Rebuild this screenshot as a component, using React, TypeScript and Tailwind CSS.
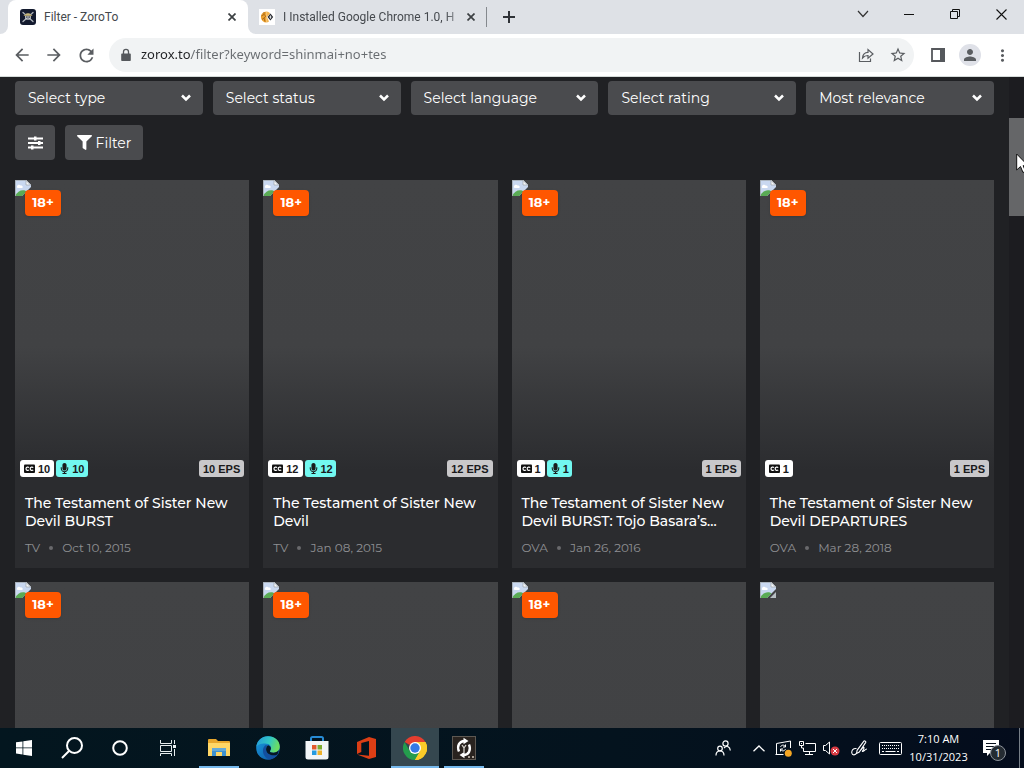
import React from "react";
import { FaFilter, FaMicrophone } from "react-icons/fa";
import { MdArrowBack, MdArrowForward, MdRefresh, MdLock, MdStarBorder, MdPerson, MdMoreVert } from "react-icons/md";

type Anime = {
  title: string;
  kind: string;
  date: string;
  sub: number;
  dub?: number;
  eps: number;
};

const filters = ["Select type", "Select status", "Select language", "Select rating", "Most relevance"];

const results: Anime[] = [
  { title: "The Testament of Sister New Devil BURST", kind: "TV", date: "Oct 10, 2015", sub: 10, dub: 10, eps: 10 },
  { title: "The Testament of Sister New Devil", kind: "TV", date: "Jan 08, 2015", sub: 12, dub: 12, eps: 12 },
  { title: "The Testament of Sister New Devil BURST: Tojo Basara’s…", kind: "OVA", date: "Jan 26, 2016", sub: 1, dub: 1, eps: 1 },
  { title: "The Testament of Sister New Devil DEPARTURES", kind: "OVA", date: "Mar 28, 2018", sub: 1, eps: 1 },
];

const nextRow = [true, true, true, false];

function CloseIcon() {
  return (
    <svg width="8" height="8" viewBox="0 0 8 8" stroke="#3c4043" strokeWidth="1.7">
      <path d="M0.5 0.5 7.5 7.5M7.5 0.5 0.5 7.5" />
    </svg>
  );
}

function PirateIcon() {
  return (
    <svg width="16" height="16" viewBox="0 0 16 16" className="shrink-0">
      <rect width="16" height="16" rx="3" fill="#131a2e" />
      <path d="M3 3.500 13 12.500M13 3.500 3 12.500" stroke="#aeb4bb" strokeWidth="1.3" strokeLinecap="round" />
      <circle cx="8" cy="8" r="2.900" fill="#d5d8d8" />
      <path d="M5 6.200C5.300 3.700 10.700 3.700 11 6.200z" fill="#c5b67c" />
      <path d="M3.800 6.500h8.400" stroke="#a3945f" strokeWidth="0.9" />
      <circle cx="6.900" cy="8.100" r="0.8" fill="#131a2e" />
      <circle cx="9.100" cy="8.100" r="0.8" fill="#131a2e" />
      <path d="M6.700 10h2.600" stroke="#131a2e" strokeWidth="0.6" />
    </svg>
  );
}

function ForumIcon() {
  return (
    <svg width="16" height="16" viewBox="0 0 16 16" className="shrink-0">
      <rect width="16" height="16" fill="#fff" />
      <path d="M7.500 2.400a5.600 5.600 0 1 0 0 11.200z" fill="#eda32f" />
      <path d="M7.500 2.400c2 0 3 1 3.600 2L8 8l2 4.600c-.8.6-1.600 1-2.500 1z" fill="#f3b44f" />
      <path d="M2.300 7 5 5.500 6.800 7.200 5 9 3 10.500M5 5.500V3M5 9l1 3.600" stroke="#9b5c17" strokeWidth="0.8" fill="none" />
      <path d="M11.400 4.400 14.200 8l-2.800 3.600L8.600 8z" fill="#26282d" />
      <path d="M11.400 6 12.500 8l-1.100 2.200L10.300 8z" fill="#d9dce0" />
    </svg>
  );
}

function TabStrip() {
  return (
    <header className="flex h-[34px] shrink-0 bg-[#dee1e6] font-[Roboto,sans-serif] text-xs text-[#45494e]">
      <div className="flex w-2 items-end bg-white">
        <span className="h-full w-full rounded-br-lg bg-[#dee1e6]" />
      </div>
      <div className="flex w-60 items-center bg-[#dee1e6]">
        <div className="flex h-full w-full items-center rounded-t-lg bg-white px-3">
          <PirateIcon />
          <button className="ml-2 flex-1 text-left">Filter - ZoroTo</button>
          <button aria-label="Close tab" className="flex w-2 justify-center"><CloseIcon /></button>
        </div>
      </div>
      <div className="flex bg-white">
        <div className="flex w-[238px] items-center rounded-bl-lg bg-[#dee1e6] px-[11px]">
          <ForumIcon />
          <button className="ml-2 flex-1 whitespace-nowrap text-left [mask-image:linear-gradient(90deg,#000_88%,transparent)]">
            I Installed Google Chrome 1.0, H
          </button>
          <button aria-label="Close tab" className="flex w-2 justify-center"><CloseIcon /></button>
        </div>
      </div>
      <span className="my-[7px] w-px bg-[#85898e]" />
      <button aria-label="New tab" className="flex w-11 items-center justify-center">
        <svg width="12" height="12" viewBox="0 0 12 12" stroke="#2f3237" strokeWidth="2"><path d="M6 0v12M0 6h12" /></svg>
      </button>
      <div className="ml-auto flex h-7">
        <button aria-label="Search tabs" className="flex w-[46px] items-center justify-center">
          <svg width="12" height="8" viewBox="0 0 12 8" fill="none" stroke="#333" strokeWidth="1.2"><path d="M1 1 6 6.5 11 1" /></svg>
        </button>
        <button aria-label="Minimize" className="flex w-[46px] items-center justify-center">
          <svg width="10" height="10" viewBox="0 0 10 10" stroke="#111"><path d="M0 5.5h10" /></svg>
        </button>
        <button aria-label="Restore" className="flex w-[46px] items-center justify-center">
          <svg width="10" height="10" viewBox="0 0 10 10" fill="none" stroke="#111"><path d="M.5 2.5h7v7h-7zM2.5 2.5v-2h7v7h-2" /></svg>
        </button>
        <button aria-label="Close" className="flex w-[46px] items-center justify-center">
          <svg width="11" height="11" viewBox="0 0 11 11" stroke="#111" strokeWidth="1.1"><path d="M.5.5l10 10M10.500.5l-10 10" /></svg>
        </button>
      </div>
    </header>
  );
}

function Toolbar() {
  return (
    <nav className="flex h-[43px] shrink-0 items-center border-b border-[#d5dbd9] bg-white pl-1.5 pr-1.5 text-[#5a5d61]">
      <button aria-label="Back" className="flex w-8 justify-center"><MdArrowBack size={20} /></button>
      <button aria-label="Forward" className="flex w-8 justify-center"><MdArrowForward size={20} /></button>
      <button aria-label="Reload" className="flex w-8 justify-center"><MdRefresh size={21} /></button>
      <div className="ml-[7px] flex h-[34px] flex-1 items-center rounded-full bg-[#f1f3f4] pl-2.5">
        <svg width="14" height="14" viewBox="0 0 14 14" fill="#55585c"><path d="M3 5.500h8a.8.8 0 0 1 .8.8v5.900a.8.8 0 0 1-.8.8H3a.8.8 0 0 1-.8-.8V6.300a.8.8 0 0 1 .8-.8z" /><path d="M4.500 6V3.800a2.500 2.500 0 0 1 5 0V6" fill="none" stroke="#55585c" strokeWidth="1.300" /></svg>
        <input
          aria-label="Address"
          defaultValue="zorox.to/filter?keyword=shinmai+no+tes"
          className="ml-2 min-w-0 flex-1 bg-[linear-gradient(90deg,#202124_50px,#686c70_50px)] bg-clip-text font-['Noto_Sans',sans-serif] text-[13px] text-transparent outline-none"
        />
        <button aria-label="Share" className="flex w-8 justify-center">
          <svg width="16" height="16" viewBox="0 0 16 16" fill="none" stroke="currentColor" strokeWidth="1.2">
            <path d="M1.500 5v9.500h11v-3M4.500 11C4.800 7.500 7 5.500 10 5.400V2.500L15 7l-5 4.300V8.500C7.500 8.400 6 9.300 4.500 11z" />
          </svg>
        </button>
        <button aria-label="Bookmark" className="flex w-8 justify-center"><MdStarBorder size={18} /></button>
      </div>
      <button aria-label="Side panel" className="ml-2 flex w-8 justify-center">
        <svg width="14" height="14" viewBox="0 0 14 14"><path d="M1 1h12v12H1z" fill="#fff" stroke="#55585c" strokeWidth="1.800" /><path d="M9 0h5v14H9z" fill="#55585c" /></svg>
      </button>
      <button aria-label="Profile" className="mx-[5px] flex size-[22px] items-center justify-center rounded-full bg-[#dfe1e8]"><MdPerson size={18} /></button>
      <button aria-label="Menu" className="flex w-8 justify-center"><MdMoreVert size={19} /></button>
    </nav>
  );
}

function BrokenImage() {
  return (
    <svg width="16" height="16" viewBox="0 0 16 16" className="block">
      <path d="M0 0h11l5 5v2L7 16H0z" fill="#c9d8f0" />
      <path d="M2 6.500C2 4.500 5 4 5.500 5.500 8 5 8.500 8 6.500 8H3C2 8 1.500 7 2 6.500z" fill="#fff" />
      <path d="M0 15.800C2.500 11.500 6 9.500 10 10.500L11.500 11.500 7 16H0z" fill="#5aab55" />
      <path d="M11 0v5h5z" fill="#f7f9fb" />
      <path d="M0 .5h11l4.500 4.500M.5 0v16M11 0v5h5" fill="none" stroke="#a5acb3" strokeWidth="0.8" />
      <path d="M16 10v6h-6z" fill="#b7bec3" />
    </svg>
  );
}

function Chevron() {
  return (
    <svg width="10" height="8" viewBox="0 0 10 8" className="pointer-events-none absolute right-3 top-[13px]" fill="none" stroke="#fff" strokeWidth="2.500">
      <path d="M1 1.500 5 5.500 9 1.500" />
    </svg>
  );
}

function Captions() {
  return (
    <svg width="11" height="10" viewBox="0 0 11 10">
      <rect y="0.500" width="11" height="8.500" rx="1" fill="#111" />
      <path d="M5 3.600C4.300 2.700 2 2.800 2 4.700s2.300 2 3 1.100M9.200 3.600C8.500 2.700 6.200 2.800 6.200 4.700s2.300 2 3 1.100" fill="none" stroke="#fff" strokeWidth="1.200" />
    </svg>
  );
}

function Poster({ adult, children }: { adult: boolean; children?: React.ReactNode }) {
  return (
    <div className="relative aspect-[234/302] bg-[linear-gradient(180deg,#424345_0%,#414244_55%,#2b2c2f_96%)]">
      <BrokenImage />
      {adult && (
        <span className="absolute left-2.5 top-2.5 flex h-[26px] w-9 items-center justify-center rounded bg-[#ff5700] text-[13px] font-bold text-white shadow">
          18+
        </span>
      )}
      {children}
    </div>
  );
}

function AnimeCard({ item }: { item: Anime }) {
  return (
    <article className="flex h-[388px] flex-col bg-[#2b2c2f]">
      <Poster adult>
        <div className="absolute inset-x-[5px] bottom-[5px] flex h-[17px] gap-0.5 font-['Liberation_Sans',Arial,sans-serif] text-[11px] font-bold text-[#1a1a1c]">
          <span className="flex items-center gap-[3px] rounded-[3px] bg-white px-1">
            <Captions />{item.sub}
          </span>
          {item.dub && (
            <span className="flex items-center gap-0.5 rounded-[3px] bg-[#72f8f0] px-[3px]">
              <FaMicrophone size={11} />{item.dub}
            </span>
          )}
          <span className="ml-auto flex items-center rounded-[3px] bg-[#c9c8ca] px-1">{item.eps} EPS</span>
        </div>
      </Poster>
      <div className="px-2.5 pt-3">
        <h3 className="h-9 text-sm font-medium leading-[18px]">
          <a href="#">{item.title}</a>
        </h3>
        <p className="mt-2 flex items-center text-xs leading-5 text-[#8f9093]">
          {item.kind}
          <span className="mx-[9px] size-1 rounded-full bg-[#69696c]" />
          {item.date}
        </p>
      </div>
    </article>
  );
}

function WebPage() {
  return (
    <div className="relative flex min-h-0 flex-1 overflow-hidden bg-[#202124] font-[Montserrat,Inter,sans-serif] text-white">
      <main className="min-w-0 flex-1 px-[15px] pt-1">
        <form className="grid grid-cols-5 gap-2.5" onSubmit={(e) => e.preventDefault()}>
          {filters.map((label) => (
            <label key={label} className="relative block">
              <select aria-label={label} className="h-[34px] w-full appearance-none rounded bg-[#4a4b4e] pl-[13px] text-sm">
                <option>{label}</option>
              </select>
              <Chevron />
            </label>
          ))}
          <div className="col-span-5 flex gap-2.5">
            <button type="button" aria-label="Options" className="flex h-[35px] w-10 items-center justify-center rounded bg-[#4a4b4e]">
              <svg width="15" height="14" viewBox="0 0 15 14" fill="#fff">
                <path d="M0 1.500h15v2H0zM0 6h15v2H0zM0 10.500h15v2H0z" />
                <path d="M6 .5h2.500v4H6zM10 5h2.500v4H10zM3 9.500h2.500v4H3z" />
              </svg>
            </button>
            <button className="flex h-[35px] w-[78px] items-center justify-center gap-1 rounded bg-[#4a4b4e] text-sm"><FaFilter size={15} />Filter</button>
          </div>
        </form>
        <section className="mt-5 grid grid-cols-4 gap-[14px]">
          {results.map((item) => <AnimeCard key={item.title} item={item} />)}
          {nextRow.map((adult, i) => <Poster key={i} adult={adult} />)}
        </section>
      </main>
      <aside className="w-[15px] shrink-0 bg-[#1c1c20] pt-[41px]">
        <div className="h-[98px] bg-[#656668]" />
      </aside>
      <svg width="14" height="22" viewBox="0 0 14 22" className="absolute -right-[6px] top-[76px]">
        <path d="M.7 1v16l3.800-3.500 2.500 6 2.600-1.200-2.500-5.600h5z" fill="#fff" stroke="#111" />
      </svg>
    </div>
  );
}

const apps = [
  {
    name: "File Explorer", frame: "",
    bar: "bg-[#76b9ed] w-10",
    icon: (
      <svg width="22" height="20" viewBox="0 0 22 20">
        <path d="M0 2a1 1 0 0 1 1-1h7l2 2h11a1 1 0 0 1 1 1v13H0z" fill="#e8a72c" />
        <path d="M0 5h22v13H0z" fill="#ffd766" />
        <path d="M4 10h14v8h-4v-4H8v4H4z" fill="#3e92cf" />
        <path d="M4 10h14v3H4z" fill="#64a9d7" />
      </svg>
    ),
  },
  {
    name: "Microsoft Edge", frame: "", bar: "",
    icon: (
      <svg width="24" height="24" viewBox="0 0 24 24">
        <defs>
          <linearGradient id="edgeTop" x1="0" x2="1" y1="0" y2=".3"><stop stopColor="#2496dc" /><stop offset=".6" stopColor="#32c8c3" /><stop offset="1" stopColor="#6bdd63" /></linearGradient>
          <linearGradient id="edgeLow" x1="0" x2="1" y1="0" y2="1"><stop stopColor="#1aa0e2" /><stop offset="1" stopColor="#0b4c9c" /></linearGradient>
        </defs>
        <circle cx="12" cy="12" r="11.800" fill="url(#edgeLow)" />
        <path d="M.3 11C1 4.500 6 .2 12 .2c7 0 11.800 4.800 11.800 10.300 0 4-3 6.200-6.300 6.200-2.800 0-4.200-1-3.300-2.300 2.600-3.600-.4-7-5.200-7C4.500 7.400 1 9 .3 11z" fill="url(#edgeTop)" />
        <path d="M9 9.500c-4 4-2 11.500 4 14 4-.2 7.400-2.400 9-5.400-5 2.500-10.800.8-11.800-3.300-.6-2.200.2-4 1.500-5.200C11 9.200 10 9 9 9.500z" fill="#134f9f" />
        <path d="M14.200 14.400c-.9 1.300.5 2.300 3.300 2.300 2 0 4-.8 5.200-2.400-.2 1.800-.6 3-1.300 4.100-4.400 2-10 .4-11.100-3.600-.6-2.200.1-4.400 1.900-5.600 2.500 1 3.600 3 2 5.200z" fill="#071724" />
      </svg>
    ),
  },
  {
    name: "Microsoft Store", frame: "", bar: "",
    icon: (
      <svg width="24" height="24" viewBox="0 0 24 24">
        <path d="M6 6V2.500C6 1.500 6.500 1 7.500 1h9c1 0 1.500.5 1.500 1.500V6" fill="none" stroke="#278bd4" strokeWidth="2" />
        <path d="M.5 5h23v16a2.500 2.500 0 0 1-2.500 2.500H3A2.500 2.500 0 0 1 .5 21z" fill="#f2f5f7" />
        <path d="M7 9h4.500v4.500H7z" fill="#e25a2d" /><path d="M12.500 9H17v4.500h-4.500z" fill="#7cac31" />
        <path d="M7 14.500h4.500V19H7z" fill="#269be0" /><path d="M12.500 14.500H17V19h-4.500z" fill="#efb22b" />
      </svg>
    ),
  },
  {
    name: "Office", frame: "", bar: "",
    icon: (
      <svg width="19" height="22" viewBox="0 0 19 22"><path d="M0 5 12 0l7 2v18l-7 2L0 17.500l12 1.300V4L4.300 6v9L0 17z" fill="#dc3e15" /></svg>
    ),
  },
  {
    name: "Google Chrome", frame: "bg-[#35474f]", bar: "bg-[#76b9ed] w-12",
    icon: (
      <svg width="24" height="24" viewBox="0 0 24 24">
        <path d="M12 12 1.600 6A12 12 0 0 1 22.400 6z" fill="#e43e2f" />
        <path d="M12 12V6h10.400A12 12 0 0 1 12 24z" fill="#fbcb28" />
        <path d="M1.600 6 6.800 15l5.200-3 5.200 3L12 24A12 12 0 0 1 1.600 6z" fill="#249c4d" />
        <path d="M17.200 15 12 24A12 12 0 0 0 22.400 6H12z" fill="#fbcb28" />
        <circle cx="12" cy="12" r="6" fill="#fff" /><circle cx="12" cy="12" r="4.700" fill="#3479e6" />
      </svg>
    ),
  },
  {
    name: "Sync tool", frame: "", bar: "bg-[#76b9ed] w-10",
    icon: (
      <svg width="24" height="24" viewBox="0 0 24 24">
        <rect x=".5" y=".5" width="23" height="23" fill="#29231f" stroke="#5d5852" />
        <path d="M12.500 5C7.500 5 4.500 10 7 15.500M11.500 19c5 0 8-5 5.500-10.500" fill="none" stroke="#fff" strokeWidth="2.400" />
        <path d="M11.500 1.800 16.500 5l-5 3.200zM12.500 15.800v6.400L7.500 19z" fill="#fff" />
        <path d="m10 9 2 3v4m2-7-2 3" fill="none" stroke="#d5d1ca" strokeWidth="1.300" />
        <path d="M16 20h2v2h-2zM20 20h2v2h-2z" fill="#aaa197" />
      </svg>
    ),
  },
];

function Taskbar() {
  return (
    <footer className="flex h-10 shrink-0 bg-[linear-gradient(90deg,#03161f,#04131e_60%,#040c1c)] text-white">
      <button aria-label="Start" className="flex w-12 items-center justify-center">
        <svg width="16" height="16" viewBox="0 0 16 16" fill="#fff"><path d="M0 2.300 6.500 1.400v6.100H0zM7.300 1.300 16 0v7.500H7.300zM0 8.300h6.500v6.200L0 13.600zM7.300 8.300H16V16l-8.700-1.300z" /></svg>
      </button>
      <button aria-label="Search" className="flex w-12 items-center justify-center">
        <svg width="22" height="22" viewBox="0 0 22 22" fill="none" stroke="#fff" strokeWidth="2"><circle cx="13.500" cy="8.500" r="7.500" /><path d="m8 14-7 7" /></svg>
      </button>
      <button aria-label="Cortana" className="flex w-12 items-center justify-center">
        <svg width="16" height="16" viewBox="0 0 16 16" fill="none" stroke="#fff" strokeWidth="2"><circle cx="8" cy="8" r="6.800" /></svg>
      </button>
      <button aria-label="Task view" className="flex w-12 items-center justify-center">
        <svg width="16" height="16" viewBox="0 0 16 16" fill="none" stroke="#e8eef0"><path d="M.5 0v3.500h11V0M.5 5.500h11v6H.5zM.5 16v-2.500h11V16M14.500 0v4M14.500 9v7" /><path d="M13 5h3v3h-3z" fill="#e8eef0" stroke="none" /></svg>
      </button>
      <div className="ml-[3px] flex gap-px">
        {apps.map((app) => (
          <button key={app.name} aria-label={app.name} className={`relative flex w-12 items-center justify-center ${app.frame}`}>
            {app.icon}
            <span className={`absolute bottom-0 h-0.5 ${app.bar}`} />
          </button>
        ))}
      </div>
      <div className="ml-auto flex items-center">
        <button aria-label="People" className="flex w-12 justify-center">
          <svg width="16" height="16" viewBox="0 0 16 16" fill="none" stroke="#fff" strokeWidth="1.200"><circle cx="10.500" cy="3.500" r="2.600" /><circle cx="5" cy="8.500" r="2.300" /><path d="M1 15.500c0-6 8-6 8 0M9 8c3-3 6-1 6.300 2.500" /></svg>
        </button>
        <button aria-label="Show hidden icons" className="flex w-6 justify-center">
          <svg width="12" height="7" viewBox="0 0 12 7" fill="none" stroke="#fff" strokeWidth="1.300"><path d="M.5 6.300 6 1l5.500 5.300" /></svg>
        </button>
        <button aria-label="Update" className="flex w-6 justify-center">
          <svg width="17" height="17" viewBox="0 0 17 17" fill="none" stroke="#fff"><path d="M8 14.500H1.500v-11L15.500 1v7M.5 14.500h8M5.500 7c1-2.500 4-2.500 5 0M10.500 4.500V7H8M10.500 9c-1 2.500-4 2.500-5 0M5.500 11.500V9H8" /><circle cx="13.300" cy="13.300" r="3.500" fill="#f5a623" stroke="none" /></svg>
        </button>
        <button aria-label="Network" className="flex w-6 justify-center">
          <svg width="17" height="15" viewBox="0 0 17 15" fill="none" stroke="#fff"><path d="M6.500 2.500h10v8H4.500V7M.5.5h4v4h-4zM2.500 4.500v2.500h2M10.500 10.500v3M6 13.500h8M2 2.500h1" /></svg>
        </button>
        <button aria-label="Volume muted" className="flex w-6 justify-center">
          <svg width="17" height="15" viewBox="0 0 17 15" fill="none" stroke="#fff"><path d="M.5 4.500h2L6.500 1v12L2.500 9.500h-2z" /><circle cx="12" cy="10" r="4.500" fill="#d83b43" stroke="none" /><path d="m10 8 4 4M14 8l-4 4" /></svg>
        </button>
        <button aria-label="Windows Ink" className="ml-1 flex w-6 justify-center">
          <svg width="17" height="17" viewBox="0 0 17 17" fill="none" stroke="#fff" strokeWidth="1.100"><path d="M5.500 8.500C2 8 .5 10.500.8 13c.4 2.500 3.700 2.500 5-.2M5.500 13.500l.6-3.200 6.600-9c.8-1 2.600.2 1.900 1.300L8.300 12zM10 10c1-2 3-3.500 3-2s-2.500 3.500-1.300 3.500S14 9 16 9" /></svg>
        </button>
        <button aria-label="Touch keyboard" className="ml-[3px] flex w-8 justify-center">
          <svg width="23" height="13" viewBox="0 0 23 13" fill="none" stroke="#fff"><rect x=".5" y=".5" width="22" height="12" rx="1" /><path d="M3 3.500h17M3 6.500h17" strokeDasharray="1 1" /><path d="M3 9.500h2M6.500 9.500h10M18 9.500h2" /></svg>
        </button>
        <button className="ml-0.5 w-[61px] whitespace-nowrap text-center text-[11px] leading-[18px]">
          <span className="block">7:10 AM</span>
          <span className="block">10/31/2023</span>
        </button>
        <button aria-label="1 notification" className="relative flex w-12 justify-center">
          <svg width="16" height="16" viewBox="0 0 16 16" className="-translate-x-0.5"><path d="M0 0h16v13H7l-3 3v-3H0z" fill="#fff" /><path d="M3 3.500h10M3 6.500h10M3 9.500h7" stroke="#07101c" /></svg>
          <span className="absolute left-[21px] top-[5px] flex size-4 items-center justify-center rounded-full border border-[#8c929a] bg-[#242b32] text-[11px]">1</span>
        </button>
        <button aria-label="Show desktop" className="ml-0.5 h-10 w-[5px] border-l border-[#777f88]" />
      </div>
    </footer>
  );
}

export default function App() {
  return (
    <div className="flex h-screen flex-col overflow-hidden font-['Segoe_UI','Open_Sans',sans-serif]">
      <TabStrip />
      <Toolbar />
      <WebPage />
      <Taskbar />
    </div>
  );
}
